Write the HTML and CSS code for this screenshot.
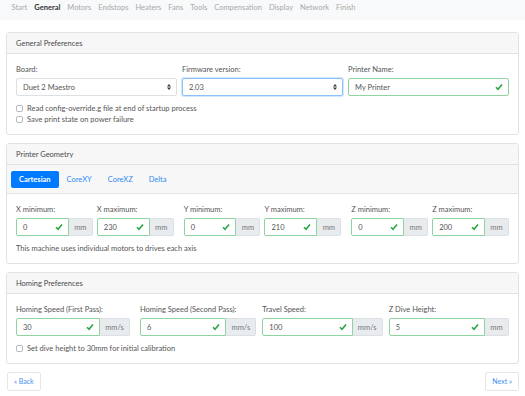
FILE: index.html
```html
<!DOCTYPE html>
<html lang="en">
<head>
  <meta charset="UTF-8" />
  <meta name="viewport" content="width=device-width, initial-scale=1" />
  <title>Configuration Tool - General</title>
  <link rel="stylesheet" href="styles.css">
</head>
<body>

  <nav class="steps">
    <a class="step">Start</a>
    <a class="step active">General</a>
    <a class="step">Motors</a>
    <a class="step">Endstops</a>
    <a class="step">Heaters</a>
    <a class="step">Fans</a>
    <a class="step">Tools</a>
    <a class="step">Compensation</a>
    <a class="step">Display</a>
    <a class="step">Network</a>
    <a class="step">Finish</a>
  </nav>

  <main class="page">

    <section class="card">
      <div class="card-header">General Preferences</div>
      <div class="card-body">
        <div class="row-3">
          <div class="field">
            <label class="label">Board:</label>
            <div class="select">
              <span>Duet 2 Maestro</span>
              <svg class="caret" viewBox="0 0 4 6"><path d="M0 2.4 2 0 4 2.4Z M0 3.6 2 6 4 3.6Z" fill="#343a40"/></svg>
            </div>
          </div>
          <div class="field">
            <label class="label">Firmware version:</label>
            <div class="select focus">
              <span>2.03</span>
              <svg class="caret" viewBox="0 0 4 6"><path d="M0 2.4 2 0 4 2.4Z M0 3.6 2 6 4 3.6Z" fill="#343a40"/></svg>
            </div>
          </div>
          <div class="field">
            <label class="label">Printer Name:</label>
            <div class="input valid">
              <span>My Printer</span>
              <svg class="check" viewBox="0 0 8 8"><path d="M1 4.3 3 6.3 7 1.6" fill="none" stroke="#28a745" stroke-width="1.6"/></svg>
            </div>
          </div>
        </div>
        <div class="checks">
          <label class="check-row"><span class="box"></span>Read config-override.g file at end of startup process</label>
          <label class="check-row"><span class="box"></span>Save print state on power failure</label>
        </div>
      </div>
    </section>

    <section class="card">
      <div class="card-header">Printer Geometry</div>
      <div class="card-tabs">
        <a class="pill active">Cartesian</a>
        <a class="pill">CoreXY</a>
        <a class="pill">CoreXZ</a>
        <a class="pill">Delta</a>
      </div>
      <div class="card-body">
        <div class="row-axes">
          <div class="pair">
            <div class="field">
              <label class="label">X minimum:</label>
              <div class="group">
                <div class="input valid"><span>0</span><svg class="check" viewBox="0 0 8 8"><path d="M1 4.3 3 6.3 7 1.6" fill="none" stroke="#28a745" stroke-width="1.6"/></svg></div>
                <div class="addon">mm</div>
              </div>
            </div>
            <div class="field">
              <label class="label">X maximum:</label>
              <div class="group">
                <div class="input valid"><span>230</span><svg class="check" viewBox="0 0 8 8"><path d="M1 4.3 3 6.3 7 1.6" fill="none" stroke="#28a745" stroke-width="1.6"/></svg></div>
                <div class="addon">mm</div>
              </div>
            </div>
          </div>
          <div class="pair">
            <div class="field">
              <label class="label">Y minimum:</label>
              <div class="group">
                <div class="input valid"><span>0</span><svg class="check" viewBox="0 0 8 8"><path d="M1 4.3 3 6.3 7 1.6" fill="none" stroke="#28a745" stroke-width="1.6"/></svg></div>
                <div class="addon">mm</div>
              </div>
            </div>
            <div class="field">
              <label class="label">Y maximum:</label>
              <div class="group">
                <div class="input valid"><span>210</span><svg class="check" viewBox="0 0 8 8"><path d="M1 4.3 3 6.3 7 1.6" fill="none" stroke="#28a745" stroke-width="1.6"/></svg></div>
                <div class="addon">mm</div>
              </div>
            </div>
          </div>
          <div class="pair">
            <div class="field">
              <label class="label">Z minimum:</label>
              <div class="group">
                <div class="input valid"><span>0</span><svg class="check" viewBox="0 0 8 8"><path d="M1 4.3 3 6.3 7 1.6" fill="none" stroke="#28a745" stroke-width="1.6"/></svg></div>
                <div class="addon">mm</div>
              </div>
            </div>
            <div class="field">
              <label class="label">Z maximum:</label>
              <div class="group">
                <div class="input valid"><span>200</span><svg class="check" viewBox="0 0 8 8"><path d="M1 4.3 3 6.3 7 1.6" fill="none" stroke="#28a745" stroke-width="1.6"/></svg></div>
                <div class="addon">mm</div>
              </div>
            </div>
          </div>
        </div>
        <p class="note">This machine uses individual motors to drives each axis</p>
      </div>
    </section>

    <section class="card">
      <div class="card-header">Homing Preferences</div>
      <div class="card-body">
        <div class="row-homing">
          <div class="field">
            <label class="label">Homing Speed (First Pass):</label>
            <div class="group">
              <div class="input valid"><span>30</span><svg class="check" viewBox="0 0 8 8"><path d="M1 4.3 3 6.3 7 1.6" fill="none" stroke="#28a745" stroke-width="1.6"/></svg></div>
              <div class="addon wide">mm/s</div>
            </div>
          </div>
          <div class="field">
            <label class="label">Homing Speed (Second Pass):</label>
            <div class="group">
              <div class="input valid"><span>6</span><svg class="check" viewBox="0 0 8 8"><path d="M1 4.3 3 6.3 7 1.6" fill="none" stroke="#28a745" stroke-width="1.6"/></svg></div>
              <div class="addon wide">mm/s</div>
            </div>
          </div>
          <div class="field">
            <label class="label">Travel Speed:</label>
            <div class="group">
              <div class="input valid"><span>100</span><svg class="check" viewBox="0 0 8 8"><path d="M1 4.3 3 6.3 7 1.6" fill="none" stroke="#28a745" stroke-width="1.6"/></svg></div>
              <div class="addon wide">mm/s</div>
            </div>
          </div>
          <div class="field">
            <label class="label">Z Dive Height:</label>
            <div class="group">
              <div class="input valid"><span>5</span><svg class="check" viewBox="0 0 8 8"><path d="M1 4.3 3 6.3 7 1.6" fill="none" stroke="#28a745" stroke-width="1.6"/></svg></div>
              <div class="addon">mm</div>
            </div>
          </div>
        </div>
        <div class="checks">
          <label class="check-row"><span class="box"></span>Set dive height to 30mm for initial calibration</label>
        </div>
      </div>
    </section>

    <div class="pager">
      <a class="page-btn">&laquo; Back</a>
      <a class="page-btn">Next &raquo;</a>
    </div>

  </main>

</body>
</html>
```

FILE: styles.css
```css
body {
  margin: 0;
  background: #fff;
  font-family: Lato, 'Open Sans', sans-serif;
  font-size: 7.5px;
  line-height: 11px;
  color: #444;
}

.steps {
  display: flex;
  background: #f8f9fa;
  height: 20px;
  padding: 2px 0 0 8px;
  box-sizing: border-box;
}

.step {
  padding: 0 3.5px;
  color: #a8a8a8;
}

.step.active {
  color: #333;
  font-weight: 700;
}

.page {
  padding: 12px 6px 0 6px;
}

.card {
  border: 1px solid #e2e2e2;
  border-radius: 3px;
  margin-bottom: 8px;
}

.card-header {
  background: #f7f7f7;
  border-bottom: 1px solid #e2e2e2;
  padding: 5px 9px 4px 9px;
  color: #4a4a4a;
}

.card-tabs {
  display: flex;
  background: #f7f7f7;
  border-bottom: 1px solid #e2e2e2;
  padding: 6px 4px 5px 4px;
}

.pill {
  padding: 3px 8px;
  color: #2f8bf5;
  border-radius: 2px;
}

.pill.active {
  background: #007bff;
  color: #fff;
  font-weight: 700;
}

.card-body {
  padding: 10px 9px 9px 9px;
}

.row-3 {
  display: grid;
  grid-template-columns: repeat(3, 1fr);
  column-gap: 5px;
}

.label {
  display: block;
  color: #555;
  margin-bottom: 3px;
}

.select,
.input {
  display: flex;
  align-items: center;
  justify-content: space-between;
  height: 18px;
  box-sizing: border-box;
  border: 1px solid #dcdfe3;
  border-radius: 2px;
  padding: 0 5px 0 6px;
  color: #555;
  background: #fff;
}

.select.focus {
  border-color: #8cc2fb;
  box-shadow: 0 0 0 1px #d3e7fd;
}

.input.valid {
  border-color: #8fd4a0;
}

.caret {
  width: 4px;
  height: 6px;
}

.check {
  width: 8px;
  height: 8px;
}

.checks {
  margin-top: 7px;
}

.check-row {
  display: flex;
  align-items: center;
  color: #555;
}

.box {
  width: 7px;
  height: 7px;
  border: 1px solid #b5bcc3;
  border-radius: 2px;
  margin-right: 4px;
  box-sizing: border-box;
}

.row-axes {
  display: grid;
  grid-template-columns: repeat(3, 1fr);
  column-gap: 10px;
}

.pair {
  display: grid;
  grid-template-columns: 1fr 1fr;
  column-gap: 4px;
}

.group {
  display: flex;
}

.group .input {
  flex: 1;
  min-width: 0;
  border-radius: 2px 0 0 2px;
}

.addon {
  display: flex;
  align-items: center;
  justify-content: center;
  width: 24px;
  height: 18px;
  box-sizing: border-box;
  background: #e9ecef;
  border: 1px solid #dcdfe3;
  border-left: none;
  border-radius: 0 2px 2px 0;
  color: #777;
}

.addon.wide {
  width: 30px;
}

.note {
  margin: 7px 0 0 0;
  color: #555;
}

.row-homing {
  display: grid;
  grid-template-columns: 114px 1fr 1fr 1fr;
  column-gap: 6px;
}

.row-homing .field:nth-child(2) {
  margin-left: 4px;
}

.pager {
  display: flex;
  justify-content: space-between;
  padding-left: 1px;
}

.page-btn {
  border: 1px solid #e6e6e6;
  border-radius: 2px;
  padding: 3px 6px;
  color: #3d8ff0;
  font-size: 7px;
}
```
